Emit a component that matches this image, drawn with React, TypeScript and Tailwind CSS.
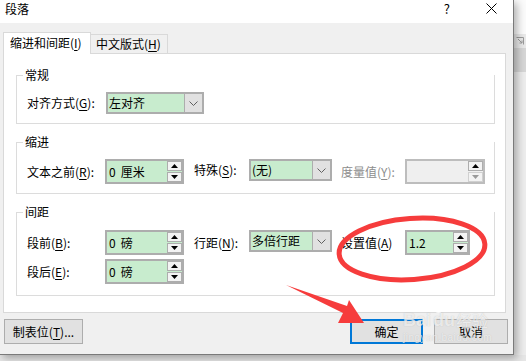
function K({ k }: { k: string }) {
  return <span className="underline underline-offset-[2px]">{k}</span>
}

function Tri({ down, color = "#000" }: { down?: boolean; color?: string }) {
  return (
    <svg width="7" height="4" viewBox="0 0 7 4">
      <path d={down ? "M0 0L3.5 4L7 0Z" : "M0 4L3.5 0L7 4Z"} fill={color} />
    </svg>
  )
}

function Spin({ value, unit, w, disabled }: { value: string; unit?: string; w: string; disabled?: boolean }) {
  return (
    <div
      className={`flex h-[25px] border-2 ${w} ${
        disabled ? "border-[#bdbdbd] bg-[#efefef]" : "border-[#adadad] bg-[#c8ecce]"
      }`}
    >
      <span className="flex-1 pl-[2px] leading-[21px]">
        {value}
        {unit && <span className="ml-[5px]">{unit}</span>}
      </span>
      <div className="flex w-[15px] flex-col gap-px">
        <div className="flex h-[10px] items-center justify-center border border-[#adadad] bg-[#f3f3f3]">
          <Tri />
        </div>
        <div
          className={`flex h-[10px] items-center justify-center border bg-[#f3f3f3] ${
            disabled ? "border-[#d0d0d0]" : "border-[#adadad]"
          }`}
        >
          <Tri down color={disabled ? "#9a9a9a" : "#000"} />
        </div>
      </div>
    </div>
  )
}

function Combo({ value, w }: { value: string; w: string }) {
  return (
    <div className={`flex h-[22px] border-2 border-[#adadad] bg-[#c8ecce] ${w}`}>
      <span className="flex-1 pl-px leading-[18px]">{value}</span>
      <span className="flex w-[18px] items-center justify-center border-l border-[#adadad] bg-[#e1e1e1]">
        <svg width="9" height="5" viewBox="0 0 9 5">
          <path d="M0.5 0.5L4.5 4.5L8.5 0.5" fill="none" stroke="#606060" />
        </svg>
      </span>
    </div>
  )
}

function Group({ title, children, className }: { title: string; children: React.ReactNode; className?: string }) {
  return (
    <div className={`flex flex-col border-x border-b border-[#dcdcdc] pl-[10px] ${className ?? ""}`}>
      <div className="-mt-[8px] flex h-[16px] items-center">
        <span className="-ml-[10px] h-px w-[6px] bg-[#dcdcdc]" />
        <span className="ml-[2px] leading-[16px]">{title}</span>
      </div>
      {children}
    </div>
  )
}

function Btn({ children, className }: { children: React.ReactNode; className?: string }) {
  return (
    <div className={`flex h-[25px] items-center justify-center bg-[#e1e1e1] ${className ?? ""}`}>{children}</div>
  )
}

export default function App() {
  return (
    <div className="relative h-[361px] w-[526px] overflow-hidden bg-[#e6e6e6] text-[12px] text-black font-['Noto_Sans_CJK_SC','Noto_Sans',sans-serif]">
      <div className="flex h-[355px]">
        {/* dialog */}
        <div className="relative z-10 flex w-[514px] flex-col border-r border-b border-[#7a7a7a] bg-[#f0f0f0] shadow-[3px_3px_8px_rgba(0,0,0,0.3)]">
          <div className="flex h-[23px] shrink-0 items-start bg-white pl-[5px] pr-[16px]">
            <span className="leading-[18px]">段落</span>
            <span className="ml-auto text-[13px] leading-[18px]">?</span>
            <svg className="ml-[36px] mt-[3px]" width="11" height="11" viewBox="0 0 11 11">
              <path d="M0.5 0.5L10.5 10.5M10.5 0.5L0.5 10.5" stroke="#000" strokeWidth="1" />
            </svg>
          </div>

          <div className="flex flex-col px-[3px] pt-[9px]">
            {/* tabs */}
            <div className="relative z-10 -mb-px flex h-[22px] items-end">
              <div className="h-[22px] w-[88px] border-x border-t border-[#d9d9d9] bg-white pl-[6px] leading-[20px]">
                缩进和间距(<K k="I" />)
              </div>
              <div className="mb-px h-[19px] w-[77px] border-t border-r border-[#d9d9d9] pl-[5px] leading-[18px]">
                中文版式(<K k="H" />)
              </div>
            </div>

            {/* panel */}
            <div className="flex w-[503px] flex-col border border-[#d9d9d9] bg-white pt-[21px] pr-[10px] pb-[16px] pl-[12px]">
              <Group title="常规">
                <div className="mt-[9px] mb-[9px] flex items-start">
                  <span className="w-[79px] leading-[22px]">
                    对齐方式(<K k="G" />):
                  </span>
                  <Combo value="左对齐" w="w-[98px]" />
                </div>
              </Group>

              <Group title="缩进" className="mt-[18px]">
                <div className="mt-[9px] mb-[9px] flex items-start">
                  <span className="w-[78px] leading-[25px]">
                    文本之前(<K k="R" />):
                  </span>
                  <Spin value="0" unit="厘米" w="w-[79px]" />
                  <span className="ml-[10px] w-[55px] leading-[22px]">
                    特殊(<K k="S" />):
                  </span>
                  <Combo value="(无)" w="w-[83px]" />
                  <span className="ml-[9px] w-[64px] leading-[25px] text-[#8d8d8d]">
                    度量值(<K k="Y" />):
                  </span>
                  <Spin value="" w="w-[80px]" disabled />
                </div>
              </Group>

              <Group title="间距" className="mt-[18px]">
                <div className="mt-[10px] flex items-start">
                  <span className="w-[78px] leading-[25px]">
                    段前(<K k="B" />):
                  </span>
                  <Spin value="0" unit="磅" w="w-[79px]" />
                  <span className="ml-[10px] w-[55px] leading-[25px]">
                    行距(<K k="N" />):
                  </span>
                  <Combo value="多倍行距" w="w-[83px]" />
                  <span className="ml-[9px] w-[64px] leading-[25px]">
                    设置值(<K k="A" />)
                  </span>
                  <Spin value="1.2" w="w-[65px]" />
                </div>
                <div className="mt-[4px] mb-[11px] flex items-start">
                  <span className="w-[78px] leading-[25px]">
                    段后(<K k="E" />):
                  </span>
                  <Spin value="0" unit="磅" w="w-[79px]" />
                </div>
              </Group>
            </div>

            {/* buttons */}
            <div className="mt-[6px] mb-[10px] flex">
              <Btn className="ml-px w-[79px] border border-[#adadad]">
                制表位(<K k="T" />)...
              </Btn>
              <Btn className="ml-[267px] w-[73px] border-2 border-[#0078d7]">确定</Btn>
              <Btn className="ml-[11px] w-[74px] border border-[#adadad]">取消</Btn>
            </div>
          </div>
        </div>

        {/* word window behind */}
        <div className="flex flex-1 flex-col">
          <div className="h-[34px] bg-[#fbfbfb]" />
          <div className="flex h-[14px] items-center bg-[#e9e9e9] pl-[2px]">
            <svg width="8" height="8" viewBox="0 0 8 8">
              <path d="M0.5 0.5H7.5V7.5M2 2L6 6M6 3.5V6H3.5" fill="none" stroke="#9a9a9a" />
            </svg>
          </div>
          <div className="h-[24px] bg-[#d6d6d6]" />
          <div className="flex-1 bg-[#ededed]" />
        </div>
      </div>

      {/* annotations */}
      <svg className="pointer-events-none absolute inset-0 z-20" width="526" height="361" viewBox="0 0 526 361">
        <ellipse
          cx="412"
          cy="249"
          rx="73"
          ry="30.5"
          transform="rotate(-4 412 249)"
          fill="none"
          stroke="#f63c3c"
          strokeWidth="5"
        />
        <polygon points="286,285 347,306 349,300 364,323 338,323 343,313" fill="#f63c3c" />
      </svg>

      {/* watermark */}
      <div className="pointer-events-none absolute left-[403px] top-[300px] z-30 flex flex-col text-white/70 [text-shadow:0_0_1px_rgba(120,120,120,0.4)]">
        <div className="flex items-end">
          <span className="text-[18px] font-bold leading-[20px] font-['Liberation_Sans',sans-serif]">Bai</span>
          <svg width="14" height="14" viewBox="0 0 14 14" className="mb-[16px] opacity-80">
            <circle cx="3" cy="5" r="1.6" fill="#fff" />
            <circle cx="6" cy="2.5" r="1.6" fill="#fff" />
            <circle cx="9.5" cy="2.5" r="1.6" fill="#fff" />
            <circle cx="12" cy="5" r="1.6" fill="#fff" />
            <ellipse cx="7.5" cy="10" rx="3.5" ry="3" fill="#fff" />
          </svg>
          <span className="-ml-[12px] text-[18px] font-bold leading-[20px] font-['Liberation_Sans',sans-serif]">du</span>
          <span className="ml-px text-[16px] leading-[20px]">经验</span>
        </div>
        <span className="mt-[3px] text-[10px] leading-[10px] tracking-[0.5px] font-['Liberation_Sans',sans-serif]">
          jingyan.baidu.com
        </span>
      </div>
    </div>
  )
}
